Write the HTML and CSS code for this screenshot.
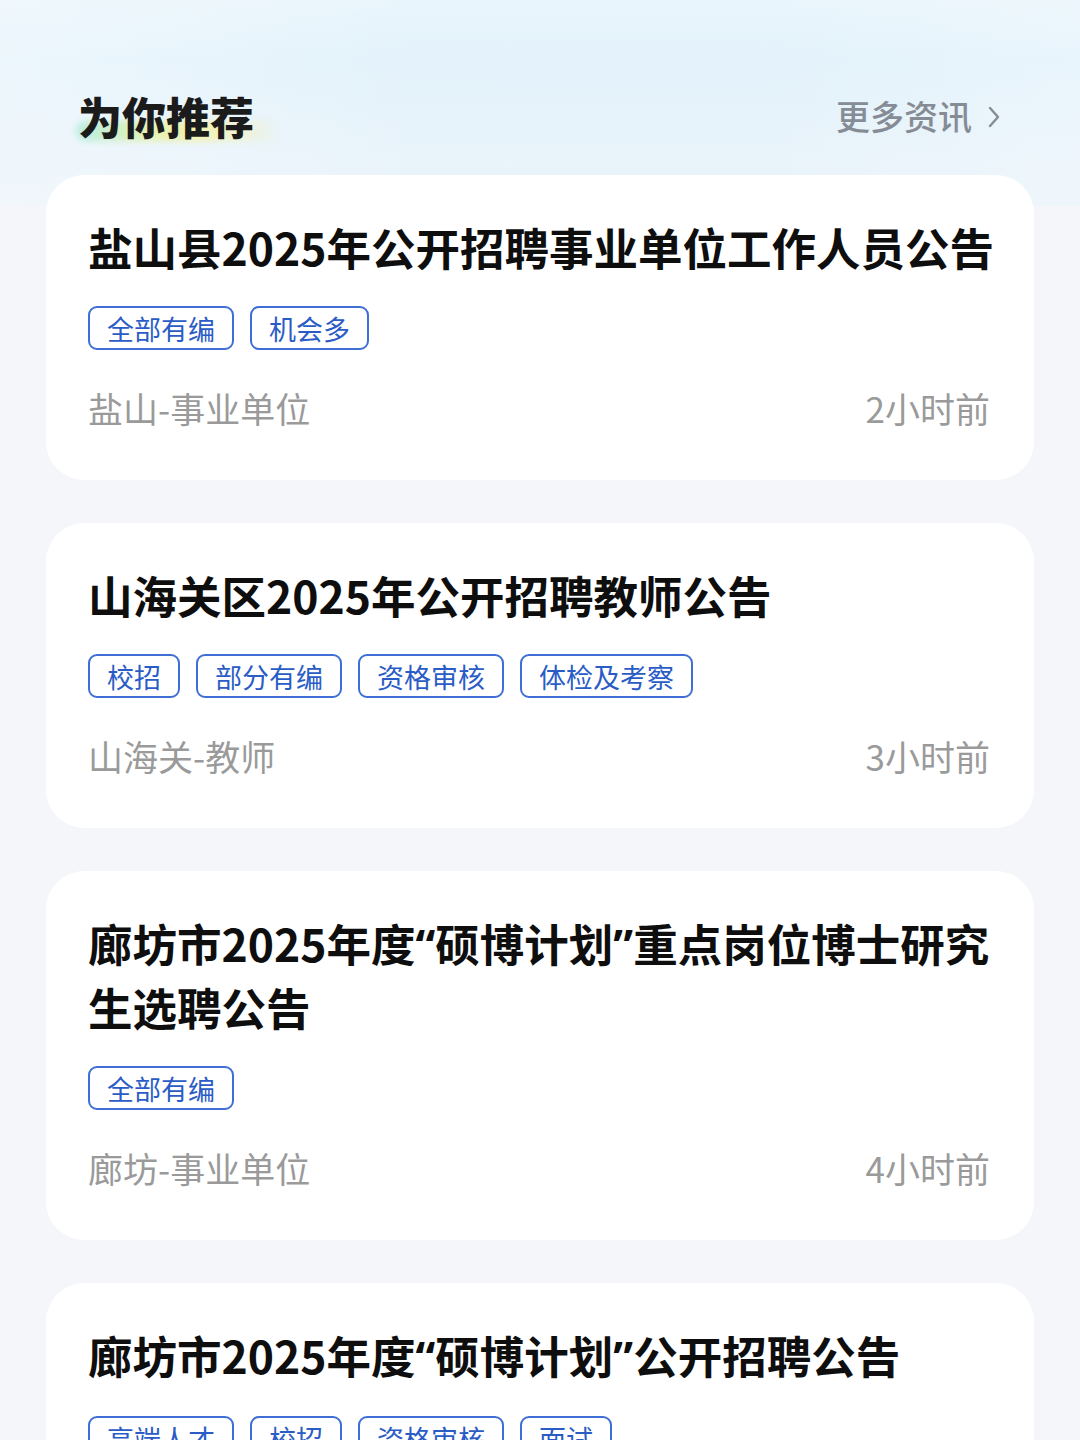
FILE: index.html
```html
<!DOCTYPE html>
<html lang="zh-CN">
<head>
<meta charset="utf-8">
<title>为你推荐</title>
<link rel="stylesheet" href="styles.css">
</head>
<body>
<div class="page">
  <header class="section-head">
    <h2 class="section-title">为你推荐</h2>
    <a class="more">更多资讯<svg class="chev" viewBox="0 0 12 22" width="12" height="22"><path d="M2 2 L10 11 L2 20" fill="none" stroke="currentColor" stroke-width="2.4" stroke-linecap="round" stroke-linejoin="round"/></svg></a>
  </header>

  <div class="list">
    <article class="card">
      <h3 class="card-title">盐山县2025年公开招聘事业单位工作人员公告</h3>
      <div class="tags"><span class="tag">全部有编</span><span class="tag">机会多</span></div>
      <div class="meta"><span>盐山-事业单位</span><span>2小时前</span></div>
    </article>

    <article class="card">
      <h3 class="card-title">山海关区2025年公开招聘教师公告</h3>
      <div class="tags"><span class="tag">校招</span><span class="tag">部分有编</span><span class="tag">资格审核</span><span class="tag">体检及考察</span></div>
      <div class="meta"><span>山海关-教师</span><span>3小时前</span></div>
    </article>

    <article class="card">
      <h3 class="card-title">廊坊市2025年度<span class="q">“</span>硕博计划<span class="q">”</span>重点岗位博士研究生选聘公告</h3>
      <div class="tags"><span class="tag">全部有编</span></div>
      <div class="meta"><span>廊坊-事业单位</span><span>4小时前</span></div>
    </article>

    <article class="card">
      <h3 class="card-title">廊坊市2025年度<span class="q">“</span>硕博计划<span class="q">”</span>公开招聘公告</h3>
      <div class="tags"><span class="tag">高端人才</span><span class="tag">校招</span><span class="tag">资格审核</span><span class="tag">面试</span></div>
      <div class="meta"><span>廊坊-事业单位</span><span>4小时前</span></div>
    </article>
  </div>
</div>
</body>
</html>
```

FILE: styles.css
```css
* { box-sizing: border-box; }

html, body {
  margin: 0;
  padding: 0;
}

body {
  font-family: "Noto Sans CJK SC", "Noto Sans", sans-serif;
  background:
    linear-gradient(90deg, rgba(255,255,255,0.3) 0%, rgba(255,255,255,0) 40%, rgba(255,255,255,0) 70%, rgba(255,255,255,0.2) 100%) 0 0 / 100% 206px no-repeat,
    linear-gradient(180deg, #e9f5fc 0px, #e3f2fb 60px, #ebf4fa 206px, #f4f6fa 206px) 0 0 / 100% 100% no-repeat,
    #f4f6fa;
  min-height: 1440px;
}

.page {
  width: 1080px;
  overflow: hidden;
  height: 1440px;
}

.section-head {
  display: flex;
  justify-content: space-between;
  align-items: flex-start;
  padding: 87px 80px 0 78px;
  height: 175px;
}

.section-title {
  position: relative;
  margin: 0;
  font-size: 44px;
  line-height: 58px;
  font-weight: 900;
  color: #1b1b1b;
  z-index: 0;
}

.section-title::after {
  content: "";
  position: absolute;
  left: -2px;
  top: 34px;
  width: 204px;
  height: 20px;
  border-radius: 10px;
  background: linear-gradient(90deg, rgba(170,235,220,0.8) 0%, rgba(225,240,170,0.9) 35%, rgba(245,240,160,0.85) 60%, rgba(245,245,200,0) 100%);
  filter: blur(3px);
  z-index: -1;
}

.more {
  display: flex;
  align-items: center;
  gap: 16px;
  font-size: 34px;
  line-height: 58px;
  font-weight: 500;
  color: #868c95;
  text-decoration: none;
}

.chev {
  display: block;
  color: #868c95;
  margin-top: 2px;
}

.list {
  display: flex;
  flex-direction: column;
  gap: 43px;
  padding: 0 46px;
}

.card {
  background: #ffffff;
  border-radius: 38px;
  padding: 41px 36px 50px 42px;
}

.card-title {
  margin: 0;
  font-size: 44.5px;
  line-height: 62px;
  font-weight: 700;
  color: #0e0e0e;
}

.card-title .q {
  font-family: "Noto Sans", sans-serif;
}

.tags {
  display: flex;
  flex-wrap: wrap;
  gap: 16px;
  margin-top: 28px;
}

.tag {
  display: inline-flex;
  align-items: center;
  height: 44px;
  padding: 0 17px;
  border: 2px solid #3f6fd6;
  border-radius: 9px;
  font-size: 27px;
  line-height: 1;
  color: #2a5cc6;
}

.meta {
  display: flex;
  justify-content: space-between;
  margin-top: 36px;
  margin-right: 8px;
  font-size: 35px;
  line-height: 44px;
  color: #9a9a9a;
}
```
